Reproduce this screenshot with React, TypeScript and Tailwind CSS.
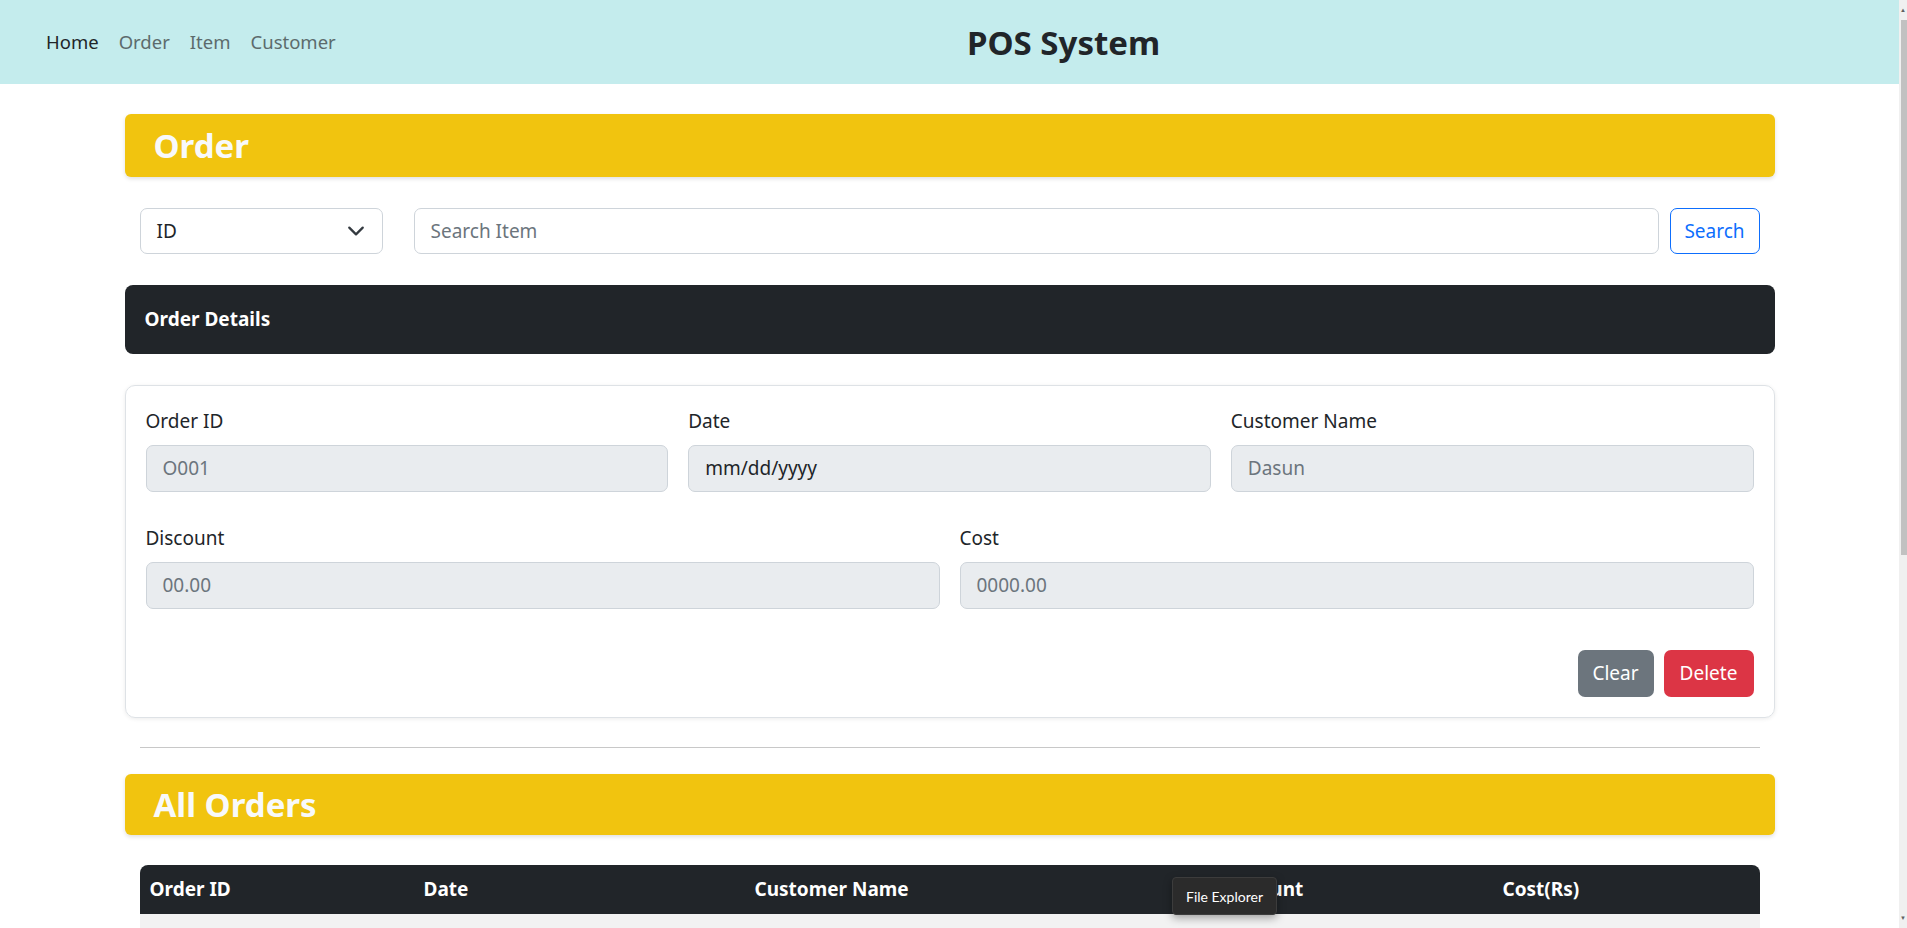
const font = { fontFamily: '"Noto Sans", "Open Sans", sans-serif' };

const navLinks = ["Order", "Item", "Customer"];

const columns = [
  { label: "Order ID", w: "w-[274px]" },
  { label: "Date", w: "w-[331px]" },
  { label: "Customer Name", w: "w-[465px]" },
  { label: "Discount", w: "w-[283px]" },
  { label: "Cost(Rs)", w: "w-[267px]" },
];

const SectionTitle = ({ title, h }: { title: string; h: string }) => (
  <div className={`flex items-center ${h} rounded-[6px] bg-[#f1c40f] pl-[29px] shadow-[0_2px_4px_rgba(0,0,0,0.12)]`}>
    <h1 className="text-[33px] font-bold text-[#f8f9fa] leading-none">{title}</h1>
  </div>
);

const Field = ({
  label,
  placeholder,
  dark,
}: {
  label: string;
  placeholder: string;
  dark?: boolean;
}) => (
  <div className="flex-1 flex flex-col">
    <label className="text-[19px] leading-[30px] text-[#212529]">{label}</label>
    <div
      className={`mt-[9px] h-[47px] flex items-center px-4 rounded-[7px] border border-[#ced4da] bg-[#e9ecef] text-[19px] ${
        dark ? "text-[#212529]" : "text-[#6c757d]"
      }`}
    >
      {placeholder}
    </div>
  </div>
);

export default function App() {
  return (
    <div className="flex h-[928px] w-full overflow-hidden bg-white" style={font}>
      <div className="flex-1 overflow-hidden relative">
        {/* navbar */}
        <nav className="h-[84px] bg-[#c4eced] flex items-center pl-[36px]">
          <div className="w-[931px] flex items-center text-[18.5px]">
            <a className="px-[10px] text-[#212529]">Home</a>
            {navLinks.map((l) => (
              <a key={l} className="px-[10px] text-[#5c6b6c]">
                {l}
              </a>
            ))}
          </div>
          <span className="text-[33px] font-bold text-[#212529] leading-none">POS System</span>
        </nav>

        <main className="w-[1650px] mx-auto pt-[30px]">
          <SectionTitle title="Order" h="h-[63px]" />

          {/* search row */}
          <div className="mt-[31px] px-[15px] flex items-center h-[46px]">
            <div className="w-[243px] h-full flex items-center justify-between pl-4 pr-[17px] rounded-[7px] border border-[#ced4da] text-[19px] text-[#212529]">
              <span>ID</span>
              <svg width="18" height="18" viewBox="0 0 16 16" fill="none">
                <path d="m2 5 6 6 6-6" stroke="#343a40" strokeWidth="2" strokeLinecap="round" strokeLinejoin="round" />
              </svg>
            </div>
            <div className="flex-1 ml-[31px] h-full flex items-center px-4 rounded-[7px] border border-[#ced4da] text-[19px] text-[#6c757d]">
              Search Item
            </div>
            <button className="ml-[11px] w-[90px] h-full rounded-[7px] border border-[#0d6efd] text-[19px] text-[#0d6efd]">
              Search
            </button>
          </div>

          {/* order details header */}
          <div className="mt-[31px] h-[69px] rounded-[8px] bg-[#212529] flex items-center pl-5">
            <span className="text-[19px] font-bold text-white">Order Details</span>
          </div>

          {/* form card */}
          <div className="mt-[31px] rounded-[10px] border border-[#dee2e6] shadow-[0_1px_4px_rgba(0,0,0,0.08)] px-5 pt-5 pb-5">
            <div className="flex gap-5">
              <Field label="Order ID" placeholder="O001" />
              <Field label="Date" placeholder="mm/dd/yyyy" dark />
              <Field label="Customer Name" placeholder="Dasun" />
            </div>
            <div className="flex gap-5 mt-[31px]">
              <Field label="Discount" placeholder="00.00" />
              <Field label="Cost" placeholder="0000.00" />
            </div>
            <div className="flex justify-end gap-[10px] mt-[41px]">
              <button className="w-[76px] h-[47px] rounded-[7px] bg-[#6c757d] text-white text-[19px]">Clear</button>
              <button className="w-[90px] h-[47px] rounded-[7px] bg-[#dc3545] text-white text-[19px]">Delete</button>
            </div>
          </div>

          <hr className="mt-[29px] mx-[15px] border-0 border-t border-[#c8c8c8]" />

          <div className="mt-[26px]">
            <SectionTitle title="All Orders" h="h-[61px]" />
          </div>

          {/* table */}
          <div className="mt-[30px] mx-[15px]">
            <div className="flex h-[49px] items-center bg-[#212529] rounded-t-[8px]">
              {columns.map((c) => (
                <div key={c.label} className={`${c.w} pl-[10px] text-[19px] font-bold text-white`}>
                  {c.label}
                </div>
              ))}
            </div>
            <div className="h-[60px] bg-[#f2f2f2]" />
          </div>
        </main>

        {/* taskbar tooltip */}
        <div className="absolute left-[1172px] top-[877px] h-[38px] w-[105px] flex items-center justify-center rounded-[4px] bg-[#2b2b2b] border border-[#3c3c3c] shadow-[0_3px_8px_rgba(0,0,0,0.35)]">
          <span className="text-[14px] text-white" style={{ fontFamily: '"Lato", sans-serif' }}>
            File Explorer
          </span>
        </div>
      </div>

      {/* scrollbar */}
      <div className="w-[8px] bg-[#f0f0f0] flex flex-col items-end">
        <div className="h-[20px] w-full flex items-center justify-center text-[6px] text-[#606060]">▲</div>
        <div className="w-[6px] h-[535px] bg-[#c1c1c1]" />
        <div className="flex-1" />
        <div className="h-[20px] w-full flex items-center justify-center text-[6px] text-[#606060]">▼</div>
      </div>
    </div>
  );
}
